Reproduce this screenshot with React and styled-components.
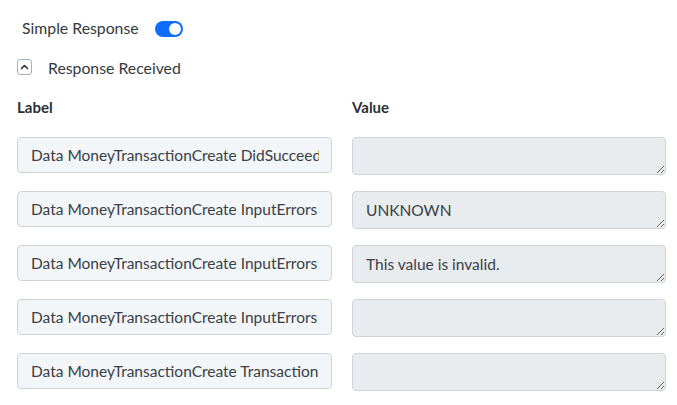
import React, { useState } from 'react';
import styled, { createGlobalStyle } from 'styled-components';

const GlobalStyle = createGlobalStyle`
  body {
    margin: 0;
    background: #ffffff;
    font-family: Lato, 'Open Sans', sans-serif;
    color: #333a40;
  }
`;

const Page = styled.div`
  padding: 15px 11px 0 17px;
  width: 677px;
  box-sizing: border-box;
`;

const ToggleRow = styled.div`
  display: flex;
  align-items: center;
  gap: 16px;
  padding-left: 5px;
  height: 24px;
  font-size: 15.8px;
`;

const Switch = styled.button`
  width: 28px;
  height: 16px;
  border-radius: 8px;
  border: none;
  padding: 0;
  background: ${(p) => (p.$on ? '#0d6efd' : '#c5ccd3')};
  position: relative;
  cursor: pointer;
  margin-top: 3px;

  &::after {
    content: '';
    position: absolute;
    top: 2px;
    left: ${(p) => (p.$on ? '14px' : '2px')};
    width: 12px;
    height: 12px;
    border-radius: 50%;
    background: #fff;
  }
`;

const SectionHeader = styled.div`
  display: flex;
  align-items: center;
  gap: 16px;
  margin-top: 16px;
  height: 24px;
  font-size: 15.8px;
`;

const CollapseBtn = styled.button`
  width: 15px;
  height: 16px;
  padding: 0;
  display: flex;
  align-items: center;
  justify-content: center;
  border: 1px solid #a8b0b8;
  border-radius: 3px;
  background: #fff;
  cursor: pointer;
`;

const Grid = styled.div`
  display: grid;
  grid-template-columns: 315px 314px;
  column-gap: 20px;
  row-gap: 16px;
  margin-top: 18px;
  align-items: start;
`;

const ColHead = styled.div`
  font-size: 15px;
  font-weight: 700;
  color: #2b3035;
  height: 20px;
  line-height: 20px;
  margin-bottom: 4px;
`;

const LabelBox = styled.input`
  box-sizing: border-box;
  width: 100%;
  height: 36px;
  padding: 0 12px 0 13px;
  border: 1px solid #ced4da;
  border-radius: 4px;
  background: #f2f6f9;
  font: inherit;
  font-size: 15.5px;
  color: #3a4046;
  outline: none;
`;

const ValueBox = styled.textarea`
  box-sizing: border-box;
  width: 100%;
  height: 38px;
  padding: 7px 12px 0 13px;
  border: 1px solid #ced4da;
  border-radius: 4px;
  background: #e9ecef;
  font: inherit;
  font-size: 15.5px;
  line-height: 22px;
  color: #3a4046;
  resize: vertical;
  outline: none;
`;

const rows = [
  { label: 'Data MoneyTransactionCreate DidSucceed', value: '' },
  { label: 'Data MoneyTransactionCreate InputErrors', value: 'UNKNOWN' },
  { label: 'Data MoneyTransactionCreate InputErrors', value: 'This value is invalid.' },
  { label: 'Data MoneyTransactionCreate InputErrors', value: '' },
  { label: 'Data MoneyTransactionCreate Transaction', value: '' },
];

const App = () => {
  const [simple, setSimple] = useState(true);
  const [open, setOpen] = useState(true);

  return (
    <Page>
      <GlobalStyle />
      <ToggleRow>
        <span>Simple Response</span>
        <Switch $on={simple} onClick={() => setSimple(!simple)} />
      </ToggleRow>
      <SectionHeader>
        <CollapseBtn onClick={() => setOpen(!open)}>
          <svg width='9' height='6' viewBox='0 0 9 6'>
            <path
              d={open ? 'M1.5 4.5 L4.5 1.5 L7.5 4.5' : 'M1.5 1.5 L4.5 4.5 L7.5 1.5'}
              fill='none'
              stroke='#2b3035'
              strokeWidth='1.6'
              strokeLinecap='round'
              strokeLinejoin='round'
            />
          </svg>
        </CollapseBtn>
        <span>Response Received</span>
      </SectionHeader>
      {open && (
        <Grid>
          <ColHead>Label</ColHead>
          <ColHead>Value</ColHead>
          {rows.map((row, i) => (
            <React.Fragment key={i}>
              <LabelBox readOnly value={row.label} />
              <ValueBox disabled value={row.value} />
            </React.Fragment>
          ))}
        </Grid>
      )}
    </Page>
  );
};

export default App;
